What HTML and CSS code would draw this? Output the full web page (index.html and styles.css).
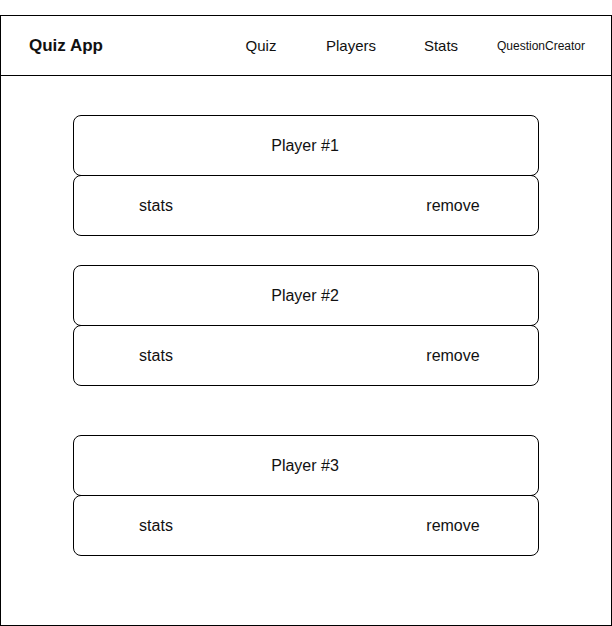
FILE: index.html
```html
<!DOCTYPE html>
<html>
<head>
  <meta name="viewport" content="width=device-width, initial-scale=1">
  <title>Quiz App</title>
  <link rel="stylesheet" href="styles.css">
</head>
<body>
  <div class="frame">
    <div class="header">
      <div class="brand">Quiz App</div>
      <nav class="nav">
        <span class="nav-item">Quiz</span>
        <span class="nav-item">Players</span>
        <span class="nav-item">Stats</span>
        <span class="nav-item small">QuestionCreator</span>
      </nav>
    </div>

    <div class="content">
      <div class="player">
        <div class="box name">Player #1</div>
        <div class="box actions">
          <span class="action">stats</span>
          <span class="action">remove</span>
        </div>
      </div>

      <div class="player">
        <div class="box name">Player #2</div>
        <div class="box actions">
          <span class="action">stats</span>
          <span class="action">remove</span>
        </div>
      </div>

      <div class="player spaced">
        <div class="box name">Player #3</div>
        <div class="box actions">
          <span class="action">stats</span>
          <span class="action">remove</span>
        </div>
      </div>
    </div>
  </div>
</body>
</html>
```

FILE: styles.css
```css
* {
  margin: 0;
  padding: 0;
  box-sizing: border-box;
}

body {
  font-family: 'Liberation Sans', Arial, sans-serif;
  background: #fff;
  color: #111;
}

.frame {
  margin-top: 15px;
  width: 612px;
  height: 611px;
  border: 1px solid #000;
  display: flex;
  flex-direction: column;
}

.header {
  height: 60px;
  border-bottom: 1px solid #000;
  display: flex;
  align-items: center;
  padding-left: 28px;
  padding-right: 15px;
}

.brand {
  font-size: 17px;
  font-weight: 700;
}

.nav {
  margin-left: auto;
  display: flex;
  align-items: center;
}

.nav-item {
  width: 90px;
  text-align: center;
  font-size: 15px;
}

.nav-item.small {
  width: 110px;
  font-size: 12px;
}

.content {
  flex: 1;
  padding: 39px 0 0 72px;
}

.player {
  width: 466px;
  margin-bottom: 29px;
}

.player.spaced {
  margin-top: 49px;
}

.box {
  height: 61px;
  border: 1px solid #000;
  border-radius: 8px;
  font-size: 16px;
  display: flex;
  align-items: center;
}

.name {
  justify-content: center;
  padding-right: 2px;
}

.actions {
  margin-top: -1px;
}

.action {
  width: 164px;
  text-align: center;
}

.action + .action {
  margin-left: 133px;
}
```
